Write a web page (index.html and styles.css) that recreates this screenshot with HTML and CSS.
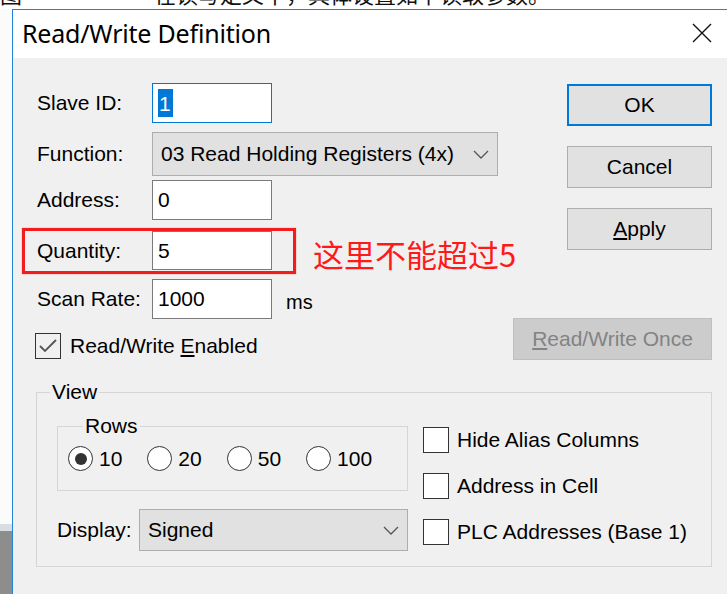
FILE: index.html
```html
<!DOCTYPE html>
<html lang="en">
<head>
<meta charset="utf-8">
<title>Read/Write Definition</title>
<link rel="stylesheet" href="styles.css">
</head>
<body>
<div class="screen">
  <div class="doc-line"><span class="doc-text">图　　　　　　在读写定义中，具体设置如下读取参数。</span></div>
  <div class="desk">
    <div class="side"></div>
    <div class="dialog">
      <div class="titlebar">
        <span class="title">Read/Write Definition</span>
        <svg class="close" width="20" height="20" viewBox="0 0 20 20"><path d="M1 1 L19 19 M19 1 L1 19" stroke="#111" stroke-width="1.4" fill="none"/></svg>
      </div>
      <div class="body">
        <div class="top">
          <div class="form">
            <div class="row r1">
              <span class="label">Slave ID:</span>
              <div class="field focus"><span class="sel">1</span></div>
            </div>
            <div class="row r2">
              <span class="label">Function:</span>
              <div class="combo wide"><span>03 Read Holding Registers (4x)</span>
                <svg class="chev" width="16" height="9" viewBox="0 0 16 9"><path d="M1 1 L8 8 L15 1" stroke="#555" stroke-width="1.3" fill="none"/></svg>
              </div>
            </div>
            <div class="row r3">
              <span class="label">Address:</span>
              <div class="field">0</div>
            </div>
            <div class="row r4">
              <span class="label">Quantity:</span>
              <div class="field">5</div>
              <span class="note">这里不能超过5</span>
              <div class="mark"></div>
            </div>
            <div class="row r5">
              <span class="label">Scan Rate:</span>
              <div class="field">1000</div>
              <span class="unit">ms</span>
            </div>
            <div class="row r6">
              <span class="check checked">
                <svg width="20" height="16" viewBox="0 0 20 16"><path d="M2 8 L7 13 L18 2" stroke="#555" stroke-width="1.8" fill="none"/></svg>
              </span>
              <span class="check-label">Read/Write <u>E</u>nabled</span>
            </div>
          </div>
          <div class="actions">
            <div class="btn default">OK</div>
            <div class="btn">Cancel</div>
            <div class="btn"><u>A</u>pply</div>
            <div class="btn disabled once"><u>R</u>ead/Write Once</div>
          </div>
        </div>
        <fieldset class="view">
          <legend>View</legend>
          <div class="view-inner">
            <div class="view-left">
              <fieldset class="rows">
                <legend>Rows</legend>
                <div class="radios">
                  <span class="radio-item"><span class="radio on"></span>10</span>
                  <span class="radio-item"><span class="radio"></span>20</span>
                  <span class="radio-item"><span class="radio"></span>50</span>
                  <span class="radio-item"><span class="radio"></span>100</span>
                </div>
              </fieldset>
              <div class="display-row">
                <span class="display-label">Display:</span>
                <div class="combo display"><span>Signed</span>
                  <svg class="chev" width="16" height="9" viewBox="0 0 16 9"><path d="M1 1 L8 8 L15 1" stroke="#555" stroke-width="1.3" fill="none"/></svg>
                </div>
              </div>
            </div>
            <div class="view-right">
              <div class="opt"><span class="check"></span>Hide Alias Columns</div>
              <div class="opt"><span class="check"></span>Address in Cell</div>
              <div class="opt"><span class="check"></span>PLC Addresses (Base 1)</div>
            </div>
          </div>
        </fieldset>
      </div>
    </div>
  </div>
</div>
</body>
</html>
```
FILE: styles.css
```css
* { box-sizing: border-box; }
html, body { margin: 0; padding: 0; background: #fff; }

.screen {
  width: 727px;
  height: 594px;
  overflow: hidden;
  background: #fff;
  font-family: "Liberation Sans", Arial, sans-serif;
  font-size: 21px;
  color: #000;
}

/* line of the surrounding document, cut by the window */
.doc-line {
  height: 9px;
  overflow: hidden;
}
.doc-text {
  display: block;
  margin-top: -18px;
  font-family: "Noto Sans CJK SC", sans-serif;
  font-size: 22px;
  line-height: 22px;
  white-space: nowrap;
  color: #111;
}

.desk {
  display: flex;
  height: 585px;
}
.side {
  width: 12px;
  flex: none;
  background: linear-gradient(to bottom, #fbfbfb 0, #fbfbfb 515px, #d9dee4 515px, #d9dee4 522px, #8d8d8d 522px);
}

.dialog {
  width: 715px;
  flex: none;
  min-width: 0;
  overflow: hidden;
  display: flex;
  flex-direction: column;
  border-top: 1px solid #1f83d8;
  border-left: 1px solid #1f83d8;
  background: #f0f0f0;
}

.titlebar {
  height: 48px;
  flex: none;
  background: #fff;
  display: flex;
  align-items: center;
  justify-content: space-between;
  padding: 0 15px 0 9px;
}
.title {
  font-family: "Noto Sans", "Liberation Sans", sans-serif;
  font-size: 25px;
  letter-spacing: -0.2px;
  color: #000;
  margin-top: -2px;
}
.close { display: block; margin-top: -2px; }

.body {
  flex: 1;
  min-width: 0;
  padding: 25px 15px 0 24px;
}

.top {
  display: flex;
  justify-content: space-between;
}

/* the form may run under the button column (the note is wide) */
.form {
  position: relative;
  flex: 1;
  min-width: 0;
}

.row {
  display: flex;
  align-items: center;
  position: relative;
}
.r1 { height: 40px; }
.r2 { height: 44px; margin-top: 9px; }
.r3 { height: 40px; margin-top: 4px; }
.r4 { height: 39px; margin-top: 11px; }
.r5 { height: 40px; margin-top: 9px; }
.r6 { height: 26px; margin-top: 14px; margin-left: -2px; }

.label {
  width: 115px;
  flex: none;
}

.field {
  width: 120px;
  flex: none;
  height: 100%;
  background: #fff;
  border: 1px solid #7a7a7a;
  padding-left: 5px;
  display: flex;
  align-items: center;
}
.field.focus { border-color: #0078d7; }
.sel {
  background: #0078d7;
  color: #fff;
  padding: 3px 2px 2px 1px;
  line-height: 23px;
}

.combo {
  height: 100%;
  flex: none;
  background: #e1e1e1;
  border: 1px solid #adadad;
  display: flex;
  align-items: center;
  justify-content: space-between;
  padding: 0 8px 0 8px;
}
.combo.wide { width: 346px; }
.chev { display: block; }

.note {
  flex: none;
  margin-left: 41px;
  font-family: "Noto Sans CJK SC", sans-serif;
  font-size: 31px;
  color: #ff1a1a;
  white-space: nowrap;
  margin-top: 6px;
}

/* red annotation frame around the quantity row */
.mark {
  position: absolute;
  left: -15px;
  top: -3px;
  width: 274px;
  height: 46px;
  border: 3px solid #f21c1c;
  box-shadow: 0 0 1px rgba(255, 0, 0, 0.6);
  pointer-events: none;
}

.unit { margin-left: 14px; font-size: 20px; margin-top: 6px; }

.check {
  width: 26px;
  height: 26px;
  flex: none;
  border: 1px solid #333;
  background: #fff;
  display: flex;
  align-items: center;
  justify-content: center;
}
.check.checked { background: transparent; }
.check-label { margin-left: 9px; white-space: nowrap; }

.actions {
  flex: none;
  display: flex;
  flex-direction: column;
  align-items: flex-end;
  padding-top: 1px;
}
.btn {
  width: 145px;
  height: 42px;
  background: #e1e1e1;
  border: 1px solid #adadad;
  display: flex;
  align-items: center;
  justify-content: center;
  margin-bottom: 20px;
}
.btn.default { border: 2px solid #0078d7; }
.btn.once {
  width: 199px;
  margin-top: 48px;
  margin-bottom: 0;
}
.btn.disabled {
  background: #cccccc;
  border-color: #bfbfbf;
  color: #838383;
}

.view {
  margin: 21px 0 0 -1px;
  padding: 0 0 15px 0;
  border: 1px solid #d5d5d5;
  min-width: 0;
}
.view > legend {
  margin-left: 13px;
  padding: 0 2px;
  line-height: 22px;
}

.view-inner {
  display: flex;
  padding-top: 12px;
}

.view-left {
  margin-left: 20px;
  width: 351px;
  flex: none;
}

.rows {
  margin: 0;
  padding: 0 0 0 10px;
  border: 1px solid #d5d5d5;
  height: 76px;
  min-width: 0;
}
.rows > legend {
  margin-left: 15px;
  padding: 0 2px;
  line-height: 22px;
}

.radios {
  display: flex;
  gap: 25px;
  padding-top: 9px;
}
.radio-item {
  display: flex;
  align-items: center;
  gap: 6px;
}
.radio {
  width: 25px;
  height: 25px;
  border-radius: 50%;
  border: 1px solid #333;
  background: #fff;
  display: flex;
  align-items: center;
  justify-content: center;
}
.radio.on::after {
  content: "";
  width: 12px;
  height: 12px;
  border-radius: 50%;
  background: #333;
}

.display-row {
  display: flex;
  align-items: center;
  height: 42px;
  margin-top: 18px;
}
.display-label { width: 82px; flex: none; }
.combo.display { width: 269px; }

.view-right {
  margin-left: 15px;
  padding-top: 12px;
  display: flex;
  flex-direction: column;
  gap: 20px;
}
.opt {
  display: flex;
  align-items: center;
  height: 26px;
  gap: 8px;
  white-space: nowrap;
}
```
